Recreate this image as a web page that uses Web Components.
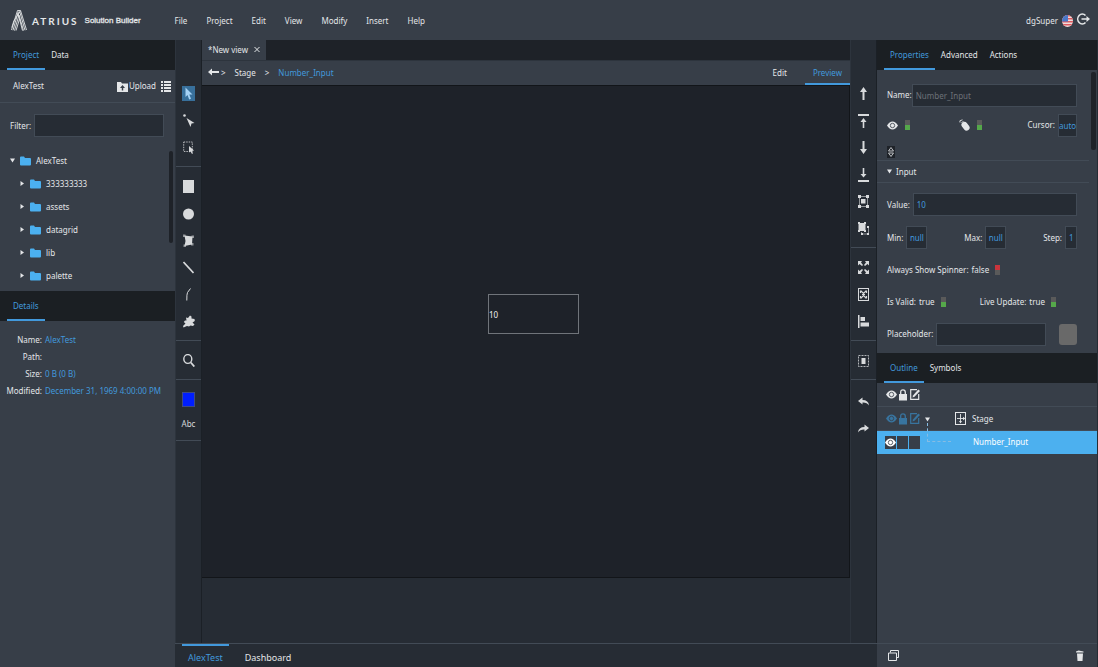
<!DOCTYPE html>
<html lang="en">
<head>
<meta charset="utf-8">
<title>ATRIUS Solution Builder</title>
<style>
html, body { margin: 0; height: 100%; background: #262c34; }
</style>
</head>
<body>
<solution-builder></solution-builder>
<script>
const BASE = `
  * { box-sizing: border-box; }
  :host { display: block; }
  button { font: inherit; color: inherit; background: none; border: 0; padding: 0; margin: 0; }
  a { color: inherit; text-decoration: none; }
  input { font: inherit; color: var(--blue); background: var(--strip); border: 1px solid var(--edge); border-radius: 0; margin: 0; padding: 0 3px; min-width: 0; height: 23px; outline: 0; }
`;

function define(tag, css, html, setup) {
  const tpl = document.createElement('template');
  tpl.innerHTML = `<style>${BASE}${css}</style>${html}`;
  customElements.define(tag, class extends HTMLElement {
    constructor() {
      super();
      this.attachShadow({ mode: 'open' }).append(tpl.content.cloneNode(true));
    }
    connectedCallback() { if (setup) setup(this, this.shadowRoot); }
  });
}

/* Each icon: [width, height, markup] */
const corners = '<path d="M0 0h3v3H0zM8 0h3v3H8zM0 10h3v3H0zM8 10h3v3H8z"/>';
const ICONS = {
  logo: [16, 21, '<g fill="none" stroke="currentColor" stroke-width=".9"><path d="M.5 20 6.500.5h3L15.500 20"/><path d="M2 20.300 7.200 2h1.600L14 20.300"/><path d="M3.500 20.600 8 5l4.500 15.600"/><path d="M5 20.600 8.500 9"/><path d="M.8 17.500 2.800 11 9.500.8M11.500 20.600 7 3"/></g>'],
  upload: [11, 11, '<path d="M0 1h4l1 1.500h6V11H0z"/><path d="M5.500 4 8 7H6.200v2.500H4.800V7H3z" fill="#373e48"/>'],
  list: [10, 11, '<path d="M0 0h2v2H0zM3 0h7v2H3zM0 3h2v2H0zM3 3h7v2H3zM0 6h2v2H0zM3 6h7v2H3zM0 9h2v2H0zM3 9h7v2H3z"/>'],
  folder: [11, 10, '<path d="M0 1.500Q0 .5 1 .5h3L5 2h5q1 0 1 1v5.500q0 1-1 1H1q-1 0-1-1z"/>'],
  down: [5, 5, '<path d="M0 .5h5L2.500 4.500z"/>'],
  right: [4, 5, '<path d="M.5 0 4 2.500.5 5z"/>'],
  close: [6, 7, '<path d="M.5 1 5.500 6M5.500 1 .5 6" fill="none" stroke="currentColor"/>'],
  back: [11, 8, '<path d="M0 4 4 .5V3h7v2H4v2.500z"/>'],
  pointer: [8, 13, '<path d="M.5.5v9.500l2-2 1.700 4.500 1.800-.8L4.300 7.500H7.500z"/>'],
  node: [12, 13, '<circle cx="1.500" cy="1.500" r="1.300"/><path d="M3.500 4 11.500 9l-3 .5-1 3.500z"/>'],
  marquee: [12, 13, '<rect x=".7" y="1" width="8.600" height="9.500" fill="none" stroke="currentColor" stroke-dasharray="1.500 1" opacity=".8"/><path d="M6 5v6.500l1.500-1 1.500 2.500 1-.7-1.200-2.300 2.200-.5z"/>'],
  rect: [11, 13, '<path d="M0 0h11v13H0z"/>'],
  circle: [11, 12, '<ellipse cx="5.500" cy="6" rx="5.500" ry="5.500"/>'],
  poly: [11, 13, '<path d="M1.500 1.500 9.500 2.500 9 10.500 1.500 12 2.500 7z"/><path d="M0 .5h2.500v2.500H0zM8.500 1.500H11V4H8.500zM8 9h2.500v2.500H8zM.5 10.500H3V13H.5z" opacity=".6"/>'],
  line: [11, 13, '<path d="M.5 1 10.500 12" fill="none" stroke="currentColor" stroke-width="1.600"/>'],
  curve: [5, 13, '<path d="M4.500.5 1.500 4.500Q.7 6 .8 12.500" fill="none" stroke="currentColor"/>'],
  blob: [12, 13, '<path d="M3 2.500 5 3 7 .5 8.500 1.500 8.500 3.500 11.500 4 11.800 6 9.500 7.500 11.500 9.500 10 11 7.500 10.500 6 11.500 4 11 .5 12.500 0 11 2.500 8.500.8 7 2 5.500 3.500 5.500z"/>'],
  search: [12, 13, '<g fill="none" stroke="currentColor" stroke-width="1.400"><ellipse cx="4.800" cy="5" rx="4" ry="4.400"/><path d="M7.800 8.500 11.300 12.500" stroke-width="1.800"/></g>'],
  up: [7, 13, '<path d="M3.500 0 7 5H4.500v8h-2V5H0z"/>'],
  top: [11, 14, '<path d="M0 0h11v2H0zM5.500 4 8.500 8H6.300v6H4.700V8H2.500z"/>'],
  dn: [7, 13, '<path d="M3.500 13 7 8H4.500V0h-2v8H0z"/>'],
  bottom: [11, 14, '<path d="M0 12h11v2H0zM5.500 9.500 8.500 6H6.300V0H4.700v6H2.500z"/>'],
  group: [11, 13, corners + '<rect x="1.500" y="1.500" width="8" height="10" fill="none" stroke="currentColor" stroke-width=".6"/><path d="M3 4h4.500v4.500H3z"/>'],
  ungroup: [11, 13, '<path d="M0 0h2v1h4V0h2v2H7.500v6H8v2H6V9H2v1H0V8h.5V2H0z"/><path d="M9 4.500h1.500V12H3.500V10" fill="none" stroke="currentColor" stroke-width=".6"/><path d="M9 4h2v2H9zM9 11h2v2H9zM3 11h2v2H3z"/>'],
  expand: [11, 13, '<path d="M0 0h4L3 1.500 5 4 4 5 1.500 3 0 4.500zM11 0H7l1 1.500L6 4l1 1 2.500-2L11 4.500zM0 13h4l-1-1.500L5 9 4 8l-2.500 2L0 8.500zM11 13H7l1-1.500L6 9l1-1 2.500 2L11 8.500z"/>'],
  fit: [11, 13, '<rect x=".5" y=".5" width="10" height="12" fill="none" stroke="currentColor"/><path d="M2.500 2.500 5.500 5.500 8.500 2.500M2.500 10.500 5.500 7.500 8.500 10.500M2.500 3v2M8.500 3v2M2.500 10V8M8.500 10V8M4 6.500h3" fill="none" stroke="currentColor" stroke-width="1.200"/>'],
  align: [11, 13, '<path d="M0 0h1.500v13H0zM2.500 2H7v4H2.500zM2.500 7.500H11v4H2.500z"/>'],
  center: [11, 12, '<rect x=".5" y=".5" width="10" height="11" fill="none" stroke="currentColor" stroke-dasharray="2 1" opacity=".8"/><path d="M3.500 3h4v6h-4z"/>'],
  undo: [11, 9, '<path d="M0 4 4.500.5V3Q10.500 3 11 8.500 9 5.300 4.500 5.500V7.500z"/>'],
  redo: [11, 9, '<path d="M11 4 6.500.5V3Q.5 3 0 8.500 2 5.300 6.500 5.500V7.500z"/>'],
  eye: [11, 9, '<path d="M0 4.500Q2.500.5 5.500.5T11 4.500Q8.500 8.500 5.500 8.500T0 4.500z"/><circle cx="5.500" cy="4.500" r="2.200" fill="none" stroke="var(--hole,#373e48)" stroke-width=".8"/>'],
  mouse: [12, 13, '<rect x="3.500" y="2.500" width="6" height="9.500" rx="3" transform="rotate(-38 6.500 7.200)"/><path d="M1 3.500Q-.5 1.500 3.500.8M2.500 4l2-2" fill="none" stroke="currentColor" stroke-width=".9"/>'],
  lock: [8, 12, '<path d="M0 5h8v6.500H0z"/><path d="M1.700 5.500V3.300Q1.700.8 4 .8t2.300 2.500v2.200" fill="none" stroke="currentColor" stroke-width="1.300"/>'],
  edit: [10, 11, '<path d="M7 .7H.7v9.600h8V5" fill="none" stroke="currentColor" stroke-width="1.200"/><path d="M2.500 8.500 3 6.500 8.300 .5 10 2 4.500 7.700z"/>'],
  stage: [11, 13, '<rect x=".5" y=".5" width="10" height="12" fill="none" stroke="currentColor"/><path d="M5.500 2v8M2 6.500h7" fill="none" stroke="currentColor" stroke-width=".9"/><path d="M4 9h3L5.500 11.500zM8 4.800 10.300 6.500 8 8.200z"/>'],
  copy: [11, 11, '<path d="M2.500 2.500V.5h8v7h-2M.5 3h8v7.500h-8z" fill="none" stroke="currentColor"/>'],
  trash: [8, 11, '<path d="M0 1.500 2.500.5 7.500 1.500V2.500H0zM1 3.500h6L6.500 11h-5z"/>'],
  stepper: [8, 12, '<path d="M1.500 5 4 1.500 6.500 5zM1.500 7 4 10.500 6.500 7z" fill="none" stroke="currentColor" stroke-width=".8"/>'],
  flag: [11, 12, '<clipPath id="c"><ellipse cx="5.500" cy="6" rx="5.500" ry="6"/></clipPath><g clip-path="url(#c)"><path d="M0 0h11v12H0z" fill="#f1dede"/><path d="M0 0h11v1.500H0zM0 3h11v1.500H0zM0 6h11v1.500H0zM0 9h11v1.500H0z" fill="#dd5a60"/><path d="M0 0h6v6.500H0z" fill="#4a78c8"/></g>'],
  logout: [13, 12, '<path d="M8.500 2.500A4.500 5 0 1 0 8.500 9.500" fill="none" stroke="currentColor" stroke-width="1.600"/><path d="M4.500 5.200H9.500V3L13 6 9.500 9V6.800h-5z"/>']
};

define('ui-icon', ':host { display: inline-block; flex: none; line-height: 0; } svg { display: block; fill: currentColor; }', '<span id="g"></span>',
  (el, root) => {
    const [w, h, body] = ICONS[el.getAttribute('name')];
    root.getElementById('g').innerHTML = `<svg width="${w}" height="${h}" viewBox="0 0 ${w} ${h}" aria-hidden="true">${body}</svg>`;
  });

define('ui-tabs', `
  :host { display: flex; align-items: stretch; height: 30px; background: var(--dark); padding-left: 7px; flex: none; }`,
  '<slot></slot>');

define('ui-tab', `
  :host { display: flex; }
  button { padding: 0 6px; color: var(--text); border-bottom: 2px solid transparent; border-top: 2px solid transparent; }
  :host([selected]) button { color: var(--blue); border-bottom-color: var(--blue); }
  :host([top]) button { padding-top: 5px; }
  :host([top][selected]) button { border-top-color: var(--blue); border-bottom-color: transparent; }`,
  '<button type="button" role="tab"><slot></slot></button>');

define('ui-switch', `
  :host { display: inline-block; flex: none; height: 10px; }
  input { appearance: none; display: block; width: 5px; height: 10px; padding: 0; border: 0; background: linear-gradient(#c9343c 50%, #5a5a5a 50%); }
  input:checked { background: linear-gradient(#5a5a5a 50%, #55a84a 50%); }`,
  '<input type="checkbox">',
  (el, root) => {
    const box = root.querySelector('input');
    box.checked = el.hasAttribute('checked');
    box.setAttribute('aria-label', el.getAttribute('label'));
  });

define('tool-button', `
  button { display: flex; width: 100%; height: 27px; align-items: center; justify-content: center; }
  span { display: flex; width: 13px; height: 15px; align-items: center; justify-content: center; }
  :host([active]) span { background: #38709b; color: #a5d2f5; }
  :host([swatch]) span { background: #001eff; border: 1px solid #3c4a86; }
  :host([text]) button { height: 22px; }
  :host([text]) span { width: auto; }`,
  '<button type="button"><span><slot></slot></span></button>',
  (el, root) => root.querySelector('button').setAttribute('aria-label', el.getAttribute('label')));

define('tool-group', ':host { padding: 6px 0 5px; border-bottom: 1px solid var(--edge); } :host([last]) { border: 0; padding-top: 8px; }', '<slot></slot>');
define('tool-strip', ':host { color: #d8dadc; background: var(--strip); padding-top: 34px; min-width: 0; border-right: 1px solid #1b2026; border-left: 1px solid #2d343d; }', '<slot></slot>');

define('app-header', `
  :host { display: flex; align-items: center; height: 40px; padding: 1px 8px 0 11px; background: var(--panel); color: var(--text); }
  .mark { margin-left: 5px; font: 700 10px/12px Lato, sans-serif; letter-spacing: 2px; }
  .name { margin-left: 6px; font: 400 8px/12px "Liberation Sans", sans-serif; -webkit-text-stroke: .3px; }
  nav { display: flex; gap: 19px; margin-left: 34px; flex: 1; }
  .user { display: flex; align-items: center; gap: 4px; }`,
  `<ui-icon name="logo"></ui-icon><span class="mark">ATRIUS</span><span class="name">Solution Builder</span>
  <nav aria-label="Main menu"><button>File</button><button>Project</button><button>Edit</button><button>View</button><button>Modify</button><button>Insert</button><button>Help</button></nav>
  <div class="user"><span>dgSuper</span><ui-icon name="flag"></ui-icon><button aria-label="Log out"><ui-icon name="logout"></ui-icon></button></div>`);

define('tree-row', `
  :host { display: flex; align-items: center; gap: 6px; height: 23px; padding-left: 20px; }
  :host([open]) { padding-left: 10px; gap: 5px; }
  .o { display: none; }
  :host([open]) .o { display: block; }
  :host([open]) .r { display: none; }
  .f { display: flex; align-items: center; gap: 5px; }
  .f ui-icon { color: #4bb0f0; }`,
  '<ui-icon class="o" name="down"></ui-icon><ui-icon class="r" name="right"></ui-icon><span class="f"><ui-icon name="folder"></ui-icon><slot></slot></span>');

define('project-panel', `
  :host { display: flex; flex-direction: column; background: var(--panel); min-width: 0; overflow: hidden; }
  .head { display: flex; align-items: center; height: 33px; padding: 0 4px 0 13px; border-bottom: 1px solid var(--edge); flex: none; }
  .head button { display: flex; align-items: center; gap: 1px; }
  .head .up { margin-left: auto; margin-right: 5px; }
  .filter { display: flex; align-items: center; gap: 3px; padding: 11px 11px 12px 10px; }
  .filter input { flex: 1; }
  .tree { position: relative; height: 142px; }
  .bar { position: absolute; right: 2px; top: 2px; width: 4px; height: 92px; border-radius: 2px; background: #1e2228; }
  dl { margin: 0; padding: 10px 8px 0 10px; display: grid; grid-template-columns: 32px 1fr; column-gap: 3px; grid-auto-rows: 17px; align-items: center; white-space: nowrap; }
  dt { justify-self: end; } dd { margin: 0; color: var(--blue); }`,
  `<ui-tabs><ui-tab selected>Project</ui-tab><ui-tab>Data</ui-tab></ui-tabs>
  <div class="head"><span>AlexTest</span><button class="up"><ui-icon name="upload"></ui-icon>Upload</button><button aria-label="List"><ui-icon name="list"></ui-icon></button></div>
  <div class="filter"><label for="f">Filter:</label><input id="f" type="text"></div>
  <div class="tree"><tree-row open>AlexTest</tree-row><tree-row>333333333</tree-row><tree-row>assets</tree-row><tree-row>datagrid</tree-row><tree-row>lib</tree-row><tree-row>palette</tree-row><div class="bar"></div></div>
  <ui-tabs><ui-tab selected>Details</ui-tab></ui-tabs>
  <dl><dt>Name:</dt><dd>AlexTest</dd><dt>Path:</dt><dd></dd><dt>Size:</dt><dd>0 B (0 B)</dd><dt>Modified:</dt><dd>December 31, 1969 4:00:00 PM</dd></dl>`);

define('view-editor', `
  :host { display: flex; flex-direction: column; min-width: 0; }
  .views { display: flex; height: 21px; background: #1e2228; border-bottom: 1px solid #2d343d; flex: none; }
  .views div { display: flex; align-items: center; gap: 6px; padding: 0 6px; background: var(--panel); }
  .crumbs { display: flex; align-items: stretch; height: 24px; background: var(--panel); flex: none; }
  nav { display: flex; align-items: center; gap: 9px; flex: 1; padding-left: 6px; }
  nav span { display: flex; align-items: center; gap: 2px; }
  nav [aria-current] { color: var(--blue); }
  .mode { padding: 0 8px; border-bottom: 2px solid transparent; border-top: 2px solid transparent; }
  .mode + .mode { margin-left: 10px; color: var(--blue); border-bottom-color: var(--blue); }
  .stage { position: relative; flex: 1; background: #1e2229; border: 1px solid #121519; border-left: 0; margin-bottom: 65px; }
  .stage input { position: absolute; left: 286px; top: 208px; width: 91px; height: 40px; padding: 0; color: #f0f0f0; background: none; border-color: #70747a; }`,
  `<div class="views"><div><span>*New view</span><button aria-label="Close"><ui-icon name="close"></ui-icon></button></div></div>
  <div class="crumbs"><nav aria-label="Breadcrumb"><span><a href="#" aria-label="Back"><ui-icon name="back"></ui-icon></a> &gt;</span><a href="#">Stage</a><span>&gt;</span><a href="#" aria-current="page">Number_Input</a></nav>
  <button class="mode">Edit</button><button class="mode">Preview</button></div>
  <div class="stage"><input aria-label="Number_Input" type="text" value="10"></div>`);

define('page-tabs', `
  ui-tabs { background: var(--strip); height: 24px; padding-left: 7px; border-top: 1px solid var(--edge); gap: 10px; font-size: 9px; }`,
  '<ui-tabs><ui-tab top selected>AlexTest</ui-tab><ui-tab top>Dashboard</ui-tab></ui-tabs>');

define('outline-row', `
  :host { display: flex; align-items: center; height: 24px; padding-left: 8px; border-bottom: 1px solid var(--edge); }
  .k { display: flex; width: 12px; justify-content: center; align-items: center; height: 13px; }
  :host([dim]) .k { color: #38749f; }
  :host([selected]) { height: 23px; background: #4cb0ef; border-bottom-color: #4cb0ef; color: #fff; }
  :host([selected]) .k { background: #373e48; border: 1px solid #4cb0ef; border-width: 0 1px 0 0; }
  :host([selected]) .x ui-icon { display: none; }`,
  '<span class="k"><ui-icon name="eye"></ui-icon></span><span class="k x"><ui-icon name="lock"></ui-icon></span><span class="k x"><ui-icon name="edit"></ui-icon></span><slot></slot>');

define('outline-panel', `
  :host { display: flex; flex-direction: column; flex: 1; }
  .list { flex: 1; position: relative; }
  .tw { margin: 2px 0 0 4px; } .st { margin: 0 6px 0 25px; } .ni { margin-left: 52px; }
  .link { position: absolute; left: 50px; top: 40px; width: 24px; height: 19px; border: 1px dashed #86bce2; border-width: 0 0 1px 1px; }
  .foot { display: flex; justify-content: space-between; align-items: center; height: 24px; padding: 2px 13px 0 11px; border-top: 1px solid var(--edge); }`,
  `<ui-tabs><ui-tab selected>Outline</ui-tab><ui-tab>Symbols</ui-tab></ui-tabs>
  <div class="list"><outline-row></outline-row><outline-row dim><ui-icon class="tw" name="down"></ui-icon><ui-icon class="st" name="stage"></ui-icon>Stage</outline-row><outline-row selected><span class="ni">Number_Input</span></outline-row><div class="link"></div></div>
  <div class="foot"><button aria-label="Duplicate"><ui-icon name="copy"></ui-icon></button><button aria-label="Delete"><ui-icon name="trash"></ui-icon></button></div>`);

define('properties-panel', `
  :host { display: flex; flex-direction: column; background: var(--panel); min-width: 0; border-right: 1px solid var(--strip); }
  .props { position: relative; height: 283px; padding: 0 8px 0 0; }
  .row { display: flex; align-items: center; padding: 0 12px 0 10px; gap: 3px; height: 32px; }
  .row.first { height: 22px; margin-top: 14px; gap: 0; }
  .row.vis { height: 38px; }
  .row.field { height: 33px; }
  .grow { flex: 1; } .push { margin-left: auto; }
  .step { display: flex; width: 8px; height: 12px; margin: 2px 0 2px 10px; background: #1e2228; justify-content: center; }
  h3 { display: flex; align-items: center; gap: 4px; margin: 0; font: inherit; height: 23px; padding-left: 10px; border: 1px solid var(--edge); border-width: 1px 0; }
  .w19 { width: 19px; padding: 0; text-align: center; } .w21 { width: 21px; padding: 0; text-align: center; } .w12 { width: 12px; }
  .sw { width: 18px; height: 21px; border-radius: 3px; background: #696969; }
  .bar { position: absolute; right: 1px; top: 2px; width: 5px; height: 78px; border-radius: 2px; background: #1e2228; }`,
  `<ui-tabs><ui-tab selected>Properties</ui-tab><ui-tab>Advanced</ui-tab><ui-tab>Actions</ui-tab></ui-tabs>
  <div class="props">
    <div class="row first"><label for="n">Name:</label><input id="n" class="grow" value="Number_Input" style="color:#6c7178"></div>
    <div class="row vis"><ui-icon name="eye"></ui-icon><ui-switch label="Visible" checked style="margin-left:4px"></ui-switch><ui-icon name="mouse" style="margin-left:46px"></ui-icon><ui-switch label="Mouse enabled" checked style="margin-left:3px"></ui-switch><label class="push" for="c">Cursor:</label><input id="c" class="w19" value="auto"></div>
    <button class="step" aria-label="Step"><ui-icon name="stepper"></ui-icon></button>
    <h3><ui-icon name="down"></ui-icon>Input</h3>
    <div class="row field" style="margin-top:5px"><label for="v">Value:</label><input id="v" class="grow" value="10"></div>
    <div class="row field"><label for="mi">Min:</label><input id="mi" class="w21" value="null"><label class="push" for="ma">Max:</label><input id="ma" class="w21" value="null"><label class="push" for="s">Step:</label><input id="s" class="w12" value="1"></div>
    <div class="row"><span>Always Show Spinner:</span><span>false</span><ui-switch label="Always Show Spinner" style="margin-left:3px"></ui-switch></div>
    <div class="row"><span>Is Valid:</span><span>true</span><ui-switch label="Is Valid" checked style="margin-left:3px"></ui-switch><span class="push">Live Update:</span><span>true</span><ui-switch label="Live Update" checked style="margin:0 21px 0 3px"></ui-switch></div>
    <div class="row"><label for="p">Placeholder:</label><input id="p" class="grow"><button class="sw" aria-label="Placeholder colour" style="margin-left:10px"></button></div>
    <div class="bar"></div>
  </div>
  <outline-panel></outline-panel>`);

define('solution-builder', `
  :host {
    --panel: #373e48; --strip: #262c34; --dark: #1b1f23; --edge: #424b56; --blue: #4299dc; --text: #e4e6e8;
    display: grid; min-height: 100vh; grid-template: 40px 1fr 24px / 175px 27px minmax(0, 1fr) 27px 221px;
    grid-template-areas: "h h h h h" "l a m b r" "l t t t r";
    font: 8px/12px "Noto Sans", "Open Sans", sans-serif; color: var(--text);
  }
  app-header { grid-area: h; } project-panel { grid-area: l; } view-editor { grid-area: m; }
  page-tabs { grid-area: t; } properties-panel { grid-area: r; }
  .a { grid-area: a; } .b { grid-area: b; }`,
  `<app-header></app-header>
  <project-panel></project-panel>
  <tool-strip class="a">
    <tool-group><tool-button label="Select" active><ui-icon name="pointer"></ui-icon></tool-button><tool-button label="Edit nodes"><ui-icon name="node"></ui-icon></tool-button><tool-button label="Marquee"><ui-icon name="marquee"></ui-icon></tool-button></tool-group>
    <tool-group><tool-button label="Rectangle"><ui-icon name="rect"></ui-icon></tool-button><tool-button label="Ellipse"><ui-icon name="circle"></ui-icon></tool-button><tool-button label="Polygon"><ui-icon name="poly"></ui-icon></tool-button><tool-button label="Line"><ui-icon name="line"></ui-icon></tool-button><tool-button label="Curve"><ui-icon name="curve"></ui-icon></tool-button><tool-button label="Shape"><ui-icon name="blob"></ui-icon></tool-button></tool-group>
    <tool-group><tool-button label="Zoom"><ui-icon name="search"></ui-icon></tool-button></tool-group>
    <tool-group><tool-button label="Fill" swatch></tool-button><tool-button label="Text" text>Abc</tool-button></tool-group>
  </tool-strip>
  <view-editor></view-editor>
  <tool-strip class="b">
    <tool-group><tool-button label="Forward"><ui-icon name="up"></ui-icon></tool-button><tool-button label="To front"><ui-icon name="top"></ui-icon></tool-button><tool-button label="Backward"><ui-icon name="dn"></ui-icon></tool-button><tool-button label="To back"><ui-icon name="bottom"></ui-icon></tool-button><tool-button label="Group"><ui-icon name="group"></ui-icon></tool-button><tool-button label="Ungroup"><ui-icon name="ungroup"></ui-icon></tool-button></tool-group>
    <tool-group><tool-button label="Expand"><ui-icon name="expand"></ui-icon></tool-button><tool-button label="Fit"><ui-icon name="fit"></ui-icon></tool-button><tool-button label="Align"><ui-icon name="align"></ui-icon></tool-button></tool-group>
    <tool-group><tool-button label="Center"><ui-icon name="center"></ui-icon></tool-button></tool-group>
    <tool-group last><tool-button label="Undo"><ui-icon name="undo"></ui-icon></tool-button><tool-button label="Redo"><ui-icon name="redo"></ui-icon></tool-button></tool-group>
  </tool-strip>
  <properties-panel></properties-panel>
  <page-tabs></page-tabs>`);
</script>
</body>
</html>
